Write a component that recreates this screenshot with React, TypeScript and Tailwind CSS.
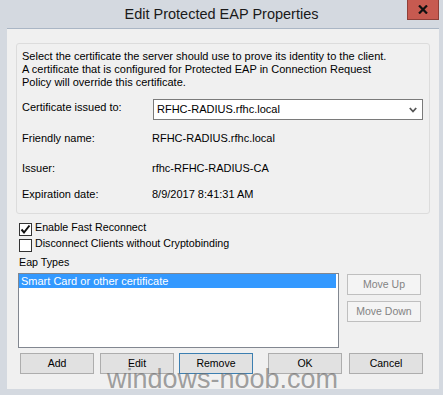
import React from "react";

function Btn({ label, className = "", focused = false, disabled = false }: { label: string; className?: string; focused?: boolean; disabled?: boolean }) {
  const base = disabled
    ? "bg-[#f4f4f4] border-[#bfbfbf] text-[#838383]"
    : focused
    ? "bg-[#e1e1e1] border-[#3c7fb1] text-black"
    : "bg-[#e1e1e1] border-[#adadad] text-black";
  return (
    <div className={`h-[21px] w-[74px] border flex items-center justify-center text-[10.5px] leading-none ${base} ${className}`}>
      {label}
    </div>
  );
}

function CheckBox({ checked }: { checked: boolean }) {
  return (
    <div className="w-[13px] h-[13px] border border-[#333333] bg-white flex items-center justify-center shrink-0">
      {checked && (
        <svg width="11" height="11" viewBox="0 0 11 11">
          <path d="M1.5 5.5 L4 8.5 L9.5 1.5" fill="none" stroke="#111" strokeWidth="2" />
        </svg>
      )}
    </div>
  );
}

export default function App() {
  return (
    <div className="w-[443px] h-[395px] bg-[#d4d9e0] flex flex-col font-['Liberation_Sans',Arial,sans-serif] text-black overflow-hidden">
      {/* title bar */}
      <div className="h-[28px] shrink-0 grid grid-cols-[1fr_auto_1fr]">
        <div />
        <div className="text-[14.5px] leading-none text-[#1a1a1a] pt-[7px]">Edit Protected EAP Properties</div>
        <div className="flex justify-end items-start pr-[4px]">
          <div className="w-[32px] h-[20px] bg-[#c75a50] border border-t-0 border-[#8f3f38] flex items-center justify-center">
            <svg width="10" height="9" viewBox="0 0 10 9">
              <path d="M1 0.5 L9 8.5 M9 0.5 L1 8.5" stroke="#111" strokeWidth="2.2" />
            </svg>
          </div>
        </div>
      </div>

      {/* client */}
      <div className="relative flex-1 ml-[7px] mr-[4px] mb-[6px] bg-[#f0f0f0] border-t border-[#aab6c5] px-[9px] pt-[14px] overflow-hidden">
        {/* group box */}
        <div className="h-[171px] border border-[#dcdcdc] rounded-[3px] pl-[5px] pr-[6px] pt-[6px] text-[11px]">
          <div className="leading-[13px]">
            <div>Select the certificate the server should use to prove its identity to the client.</div>
            <div>A certificate that is configured for Protected EAP in Connection Request</div>
            <div>Policy will override this certificate.</div>
          </div>
          <div className="flex items-start mt-[10px]">
            <div className="w-[131px] leading-[13px] pt-[2px]">Certificate issued to:</div>
            <div className="flex-1 h-[21px] bg-white border border-[#7a7a7a] flex items-center pl-[3px] pr-[5px]">
              <div className="flex-1 leading-none">RFHC-RADIUS.rfhc.local</div>
              <svg width="8" height="6" viewBox="0 0 8 6">
                <path d="M0.8 1 L4 4.5 L7.2 1" fill="none" stroke="#555" strokeWidth="1.8" />
              </svg>
            </div>
          </div>
          <div className="flex leading-[13px] mt-[12px]">
            <div className="w-[130px]">Friendly name:</div>
            <div>RFHC-RADIUS.rfhc.local</div>
          </div>
          <div className="flex leading-[13px] mt-[17px]">
            <div className="w-[130px]">Issuer:</div>
            <div>rfhc-RFHC-RADIUS-CA</div>
          </div>
          <div className="flex leading-[13px] mt-[13px]">
            <div className="w-[130px]">Expiration date:</div>
            <div>8/9/2017 8:41:31 AM</div>
          </div>
        </div>

        {/* checkboxes */}
        <div className="mt-[9px] ml-[3px] text-[10.7px]">
          <div className="flex items-start h-[16px]">
            <CheckBox checked />
            <span className="ml-[3px] leading-[13px] -mt-[2px]">Enable Fast Reconnect</span>
          </div>
          <div className="flex items-start h-[16px]">
            <CheckBox checked={false} />
            <span className="ml-[3px] leading-[13px] -mt-[2px]">Disconnect Clients without Cryptobinding</span>
          </div>
          <div className="leading-[13px] mt-[1px]">Eap Types</div>
        </div>

        {/* list + move buttons */}
        <div className="flex items-start mt-[4px] ml-[2px]">
          <div className="w-[321px] h-[75px] bg-white border border-[#828790]">
            <div className="h-[14px] bg-[#3399ff] text-white text-[11px] leading-[14px] pl-[2px] mr-[2px]">
              Smart Card or other certificate
            </div>
          </div>
          <div className="ml-[8px] mt-[1px] flex flex-col gap-[6px]">
            <Btn label="Move Up" disabled className="w-[73px]" />
            <Btn label="Move Down" disabled className="w-[73px]" />
          </div>
        </div>

        {/* bottom buttons */}
        <div className="flex mt-[5px] ml-[4px]">
          <Btn label="Add" />
          <Btn label="Edit" className="ml-[6px]" />
          <Btn label="Remove" focused className="ml-[5px]" />
          <Btn label="OK" className="ml-[15px]" />
          <Btn label="Cancel" className="ml-[7px]" />
        </div>

        {/* watermark */}
        <div className="absolute left-[100px] top-[337px] text-[27px] leading-none text-[rgba(110,110,110,0.65)] pointer-events-none">
          windows-noob.com
        </div>
      </div>
    </div>
  );
}
